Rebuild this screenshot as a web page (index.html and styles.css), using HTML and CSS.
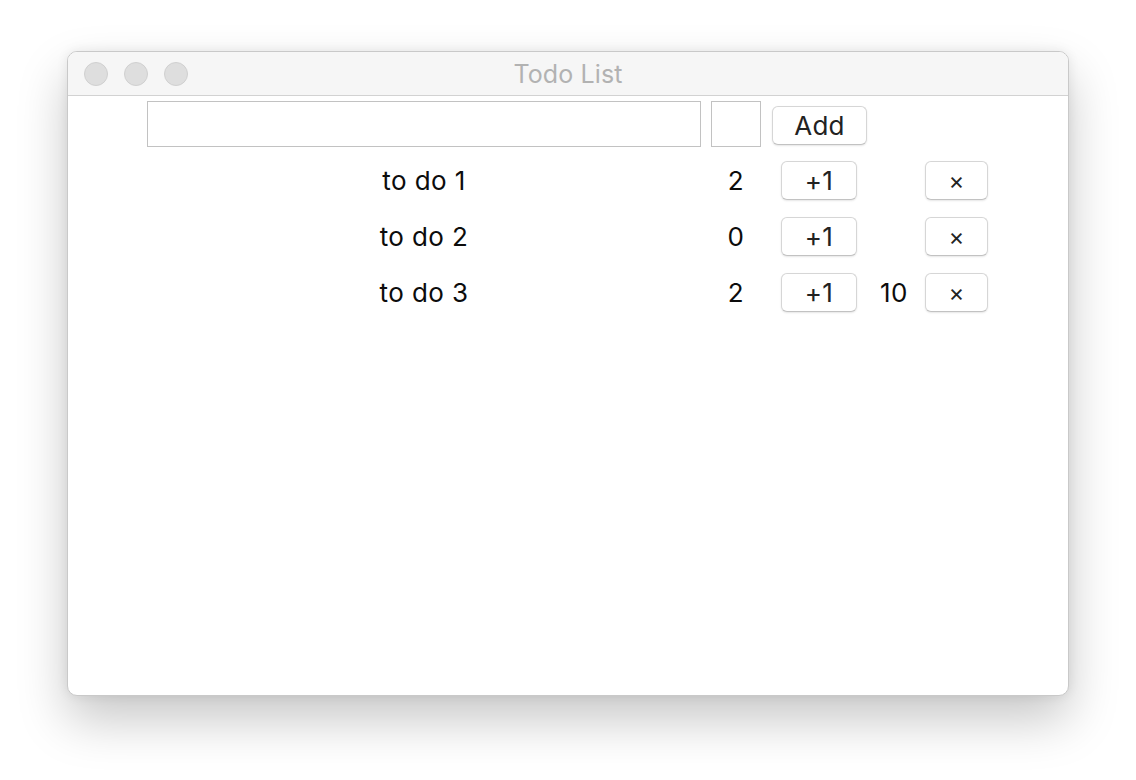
FILE: index.html
```html
<!DOCTYPE html>
<html>
<head>
<meta charset="utf-8">
<link rel="stylesheet" href="styles.css">
</head>
<body>
<div class="window">
  <div class="titlebar">
    <div class="lights">
      <span class="light"></span>
      <span class="light"></span>
      <span class="light"></span>
    </div>
    <div class="title">Todo List</div>
    <div class="spacer"></div>
  </div>
  <div class="content">
    <div class="add-row">
      <input class="text-input" type="text">
      <input class="num-input" type="text">
      <button class="btn add-btn">Add</button>
    </div>
    <div class="todo">
      <div class="name">to do 1</div>
      <div class="count">2</div>
      <div class="inc-cell"><button class="btn inc-btn">+1</button></div>
      <div class="extra"></div>
      <button class="btn del-btn">×</button>
    </div>
    <div class="todo">
      <div class="name">to do 2</div>
      <div class="count">0</div>
      <div class="inc-cell"><button class="btn inc-btn">+1</button></div>
      <div class="extra"></div>
      <button class="btn del-btn">×</button>
    </div>
    <div class="todo">
      <div class="name">to do 3</div>
      <div class="count">2</div>
      <div class="inc-cell"><button class="btn inc-btn">+1</button></div>
      <div class="extra">10</div>
      <button class="btn del-btn">×</button>
    </div>
  </div>
</div>
</body>
</html>
```
FILE: styles.css
```css
html, body {
  margin: 0;
  padding: 0;
  background: #ffffff;
}
body {
  box-sizing: border-box;
  min-height: 780px;
  padding: 51px 0 0 67px;
  font-family: Inter, "Noto Sans", sans-serif;
}
.window {
  box-sizing: border-box;
  width: 1002px;
  height: 645px;
  background: #ffffff;
  border: 1px solid #c9c9c9;
  border-radius: 10px;
  box-shadow: 0 24px 50px rgba(0,0,0,0.22), 0 0 12px rgba(0,0,0,0.08);
  overflow: hidden;
}
.titlebar {
  height: 43px;
  background: #f6f6f6;
  border-bottom: 1px solid #d2d2d2;
  display: grid;
  grid-template-columns: 1fr auto 1fr;
  align-items: center;
}
.lights {
  display: flex;
  gap: 16px;
  padding-left: 16px;
}
.light {
  box-sizing: border-box;
  width: 24px;
  height: 24px;
  border-radius: 50%;
  background: #dedede;
  border: 1px solid #d0d0d0;
}
.title {
  font-size: 25px;
  color: #b2b2b2;
  letter-spacing: 0.1px;
}
.content {
  padding: 5px 0 0 79px;
}
.add-row {
  display: flex;
  align-items: center;
  height: 46px;
}
.text-input, .num-input {
  box-sizing: border-box;
  height: 46px;
  border: 1px solid #c2c2c2;
  border-radius: 0;
  margin: 0;
  padding: 0;
  background: #fff;
  outline: none;
}
.text-input { width: 554px; }
.num-input { width: 50px; margin-left: 10px; }
.btn {
  box-sizing: border-box;
  margin: 0;
  padding: 0;
  height: 39px;
  background: #ffffff;
  border: 1px solid #d6d6d6;
  border-bottom-color: #c2c2c2;
  border-radius: 6px;
  box-shadow: 0 1px 2px rgba(0,0,0,0.1);
  font-family: Inter, "Noto Sans", sans-serif;
  font-size: 26px;
  letter-spacing: 0.3px;
  color: #222222;
}
.add-btn {
  width: 95px;
  margin-left: 11px;
  margin-top: 2px;
}
.todo {
  display: flex;
  align-items: center;
  height: 56px;
  font-size: 26px;
  letter-spacing: 0.4px;
  color: #0c0c0c;
}
.add-row + .todo { margin-top: 5px; }
.name {
  width: 554px;
  text-align: center;
}
.count {
  width: 50px;
  margin-left: 10px;
  text-align: center;
}
.inc-cell {
  width: 96px;
  margin-left: 10px;
  display: flex;
  justify-content: center;
}
.inc-btn { width: 76px; }
.extra {
  width: 54px;
  text-align: center;
}
.del-btn {
  width: 63px;
  margin-left: 4px;
  font-size: 24px;
}
```
